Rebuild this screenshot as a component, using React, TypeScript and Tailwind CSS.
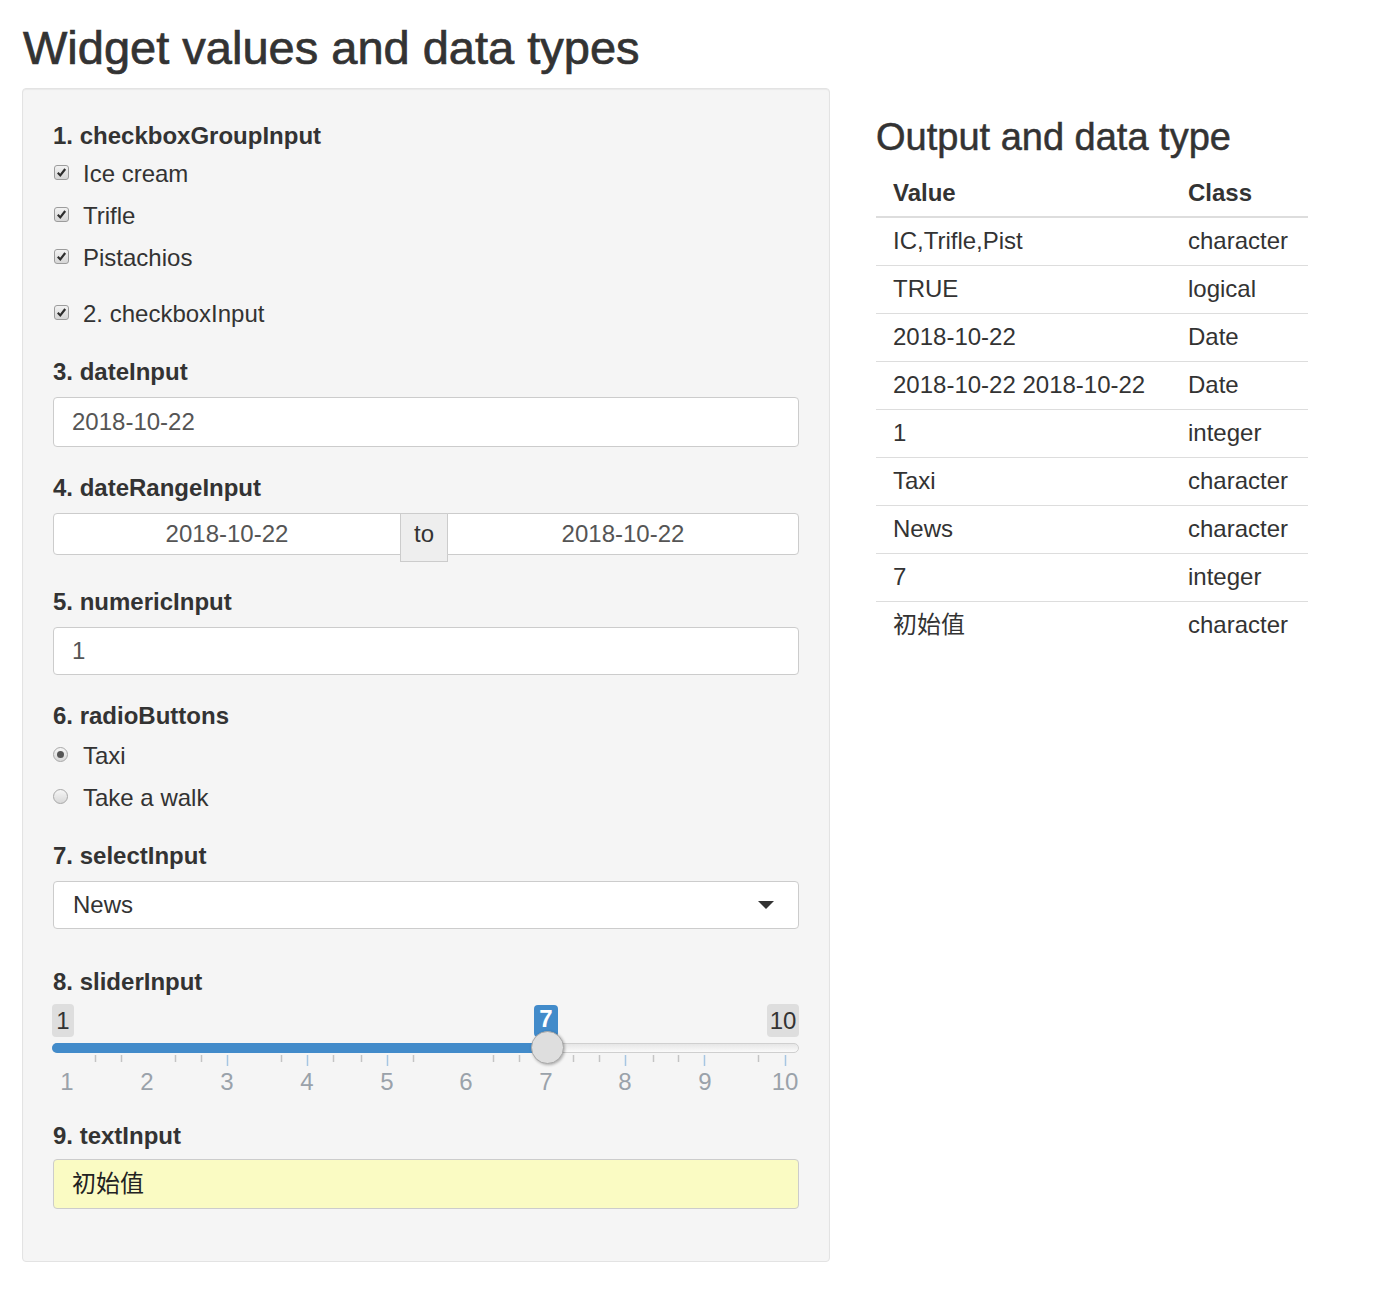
import React from "react";

const FONT = "font-['Liberation_Sans','Noto_Sans_CJK_SC',sans-serif]";

const rows: [string, string][] = [
	["IC,Trifle,Pist", "character"],
	["TRUE", "logical"],
	["2018-10-22", "Date"],
	["2018-10-22 2018-10-22", "Date"],
	["1", "integer"],
	["Taxi", "character"],
	["News", "character"],
	["7", "integer"],
	["初始值", "character"],
];

// slider tick positions, relative to the track's left edge
const minorTicks = [43, 69, 123, 149, 229, 281, 309, 361, 441, 467, 521, 547, 601, 626, 706];
const majorTicks = [175, 255, 335, 573, 652, 733];
const tickLabels = [15, 95, 175, 255, 335, 414, 494, 573, 653, 733];

function Label({ children, className = "" }: { children: React.ReactNode; className?: string }) {
	return <div className={`h-[34px] leading-[34px] font-bold ${className}`}>{children}</div>;
}

function CheckMark() {
	return (
		<span className="w-[15px] h-[15px] ml-px mt-[-3px] rounded-[3px] border border-[#9c9c9c] bg-gradient-to-b from-[#f2f2f2] to-[#d6d6d6] flex items-center justify-center">
			<svg width="11" height="11" viewBox="0 0 11 11">
				<path d="M1.8 5.8 L4.3 8.4 L9.2 2" fill="none" stroke="#2e2e2e" strokeWidth="2.2" />
			</svg>
		</span>
	);
}

function Checkbox({ label }: { label: string }) {
	return (
		<div className="h-[42px] flex items-center">
			<CheckMark />
			<span className="ml-[14px]">{label}</span>
		</div>
	);
}

function Radio({ label, checked }: { label: string; checked?: boolean }) {
	return (
		<div className="h-[42px] flex items-center">
			<span className="w-[15px] h-[15px] mt-[-3px] rounded-full border border-[#a8a8a8] bg-gradient-to-b from-[#f6f6f6] to-[#d8d8d8] flex items-center justify-center">
				{checked && <span className="w-[7px] h-[7px] rounded-full bg-[#555]" />}
			</span>
			<span className="ml-[15px]">{label}</span>
		</div>
	);
}

function Slider() {
	return (
		<div className="relative h-[120px] w-[748px] -ml-px">
			<div className="absolute left-0 top-[5px] w-[22px] h-[33px] rounded-[4px] bg-[#dedede] text-[#333] text-center leading-[33px]">1</div>
			<div className="absolute left-[715px] top-[5px] w-[32px] h-[33px] rounded-[4px] bg-[#dedede] text-[#333] text-center leading-[33px]">10</div>
			<div className="absolute left-[482px] top-[6px] w-[24px] h-[32px] rounded-[4px] bg-[#428bca] text-white font-bold text-center leading-[28px]">7</div>
			<div className="absolute left-0 top-[44px] w-[747px] h-[10px] rounded-full border border-[#cfcfcf] bg-gradient-to-b from-[#e6e6e6] to-[#fafafa]" />
			<div className="absolute left-0 top-[44px] w-[497px] h-[10px] rounded-l-full bg-[#428bca]" />
			<div className="absolute left-[479px] top-[32px] w-[33px] h-[33px] rounded-full border border-[#a9a9a9] bg-[#dedede] shadow-[1px_1px_3px_rgba(0,0,0,0.3)]" />
			<svg className="absolute left-0 top-[56px]" width="748" height="12">
				{minorTicks.map((x) => (
					<line key={x} x1={x + 0.5} x2={x + 0.5} y1="0" y2="7" stroke="#c4c4c4" strokeWidth="1.5" />
				))}
				{majorTicks.map((x) => (
					<line key={x} x1={x + 0.5} x2={x + 0.5} y1="0" y2="11" stroke="#a6c6e3" strokeWidth="1.5" />
				))}
			</svg>
			{tickLabels.map((x, i) => (
				<span
					key={x}
					className="absolute top-[70px] w-[40px] -ml-[20px] text-center leading-[26px] text-[#9aa2aa]"
					style={{ left: x }}
				>
					{i + 1}
				</span>
			))}
		</div>
	);
}

export default function App() {
	return (
		<div className={`${FONT} text-[24px] text-[#333] bg-white min-h-[1290px] pl-[22px]`}>
			<h1 className="pt-[22px] pl-px text-[47px] leading-[52px] text-[#333] [-webkit-text-stroke:0.7px_#333]">Widget values and data types</h1>

			<div className="flex gap-[46px] mt-[14px]">
				{/* 输入面板 */}
				<div className="w-[808px] h-[1174px] rounded-[4px] border border-[#e3e3e3] bg-[#f5f5f5] shadow-[inset_0_1px_1px_rgba(0,0,0,0.05)] pl-[30px] pr-[30px] pt-[30px]">
					<Label>1. checkboxGroupInput</Label>
					<Checkbox label="Ice cream" />
					<Checkbox label="Trifle" />
					<Checkbox label="Pistachios" />

					<div className="mt-[18px] h-[34px] flex items-center">
						<CheckMark />
						<span className="ml-[14px]">2. checkboxInput</span>
					</div>

					<Label className="mt-[24px]">3. dateInput</Label>
					<div className="mt-[8px] h-[50px] rounded-[4px] border border-[#ccc] bg-white pl-[18px] flex items-center text-[#555]">2018-10-22</div>

					<Label className="mt-[24px]">4. dateRangeInput</Label>
					<div className="mt-[8px] flex items-start text-[#555]">
						<div className="w-[348px] h-[42px] rounded-l-[4px] border border-[#ccc] bg-white flex items-center justify-center">2018-10-22</div>
						<div className="w-[48px] h-[49px] -ml-px border border-[#ccc] bg-[#eee] text-[#333] text-center pt-[3px] leading-[34px]">to</div>
						<div className="flex-1 h-[42px] -ml-px rounded-r-[4px] border border-[#ccc] bg-white flex items-center justify-center">2018-10-22</div>
					</div>

					<Label className="mt-[23px]">5. numericInput</Label>
					<div className="mt-[8px] h-[48px] rounded-[4px] border border-[#ccc] bg-white pl-[18px] flex items-center text-[#555]">1</div>

					<Label className="mt-[24px]">6. radioButtons</Label>
					<div className="mt-[2px]">
						<Radio label="Taxi" checked />
						<Radio label="Take a walk" />
					</div>

					<Label className="mt-[20px]">7. selectInput</Label>
					<div className="mt-[8px] h-[48px] rounded-[4px] border border-[#ccc] bg-white pl-[19px] pr-[24px] flex items-center justify-between text-[#333]">
						<span>News</span>
						<svg width="16" height="8" viewBox="0 0 16 8">
							<path d="M0 0 H16 L8 8 Z" fill="#333" />
						</svg>
					</div>

					<Label className="mt-[36px]">8. sliderInput</Label>
					<Slider />

					<Label>9. textInput</Label>
					<div className="mt-[6px] h-[50px] rounded-[4px] border border-[#ccc] bg-[#fafbc3] pl-[18px] flex items-center text-[#222]">初始值</div>
				</div>

				{/* 输出表格 */}
				<div className="w-[432px]">
					<h2 className="mt-[28px] text-[38px] leading-[42px] [-webkit-text-stroke:0.5px_#333]">Output and data type</h2>
					<table className="mt-[11px] w-[432px] border-collapse">
						<thead>
							<tr className="border-b-2 border-[#ddd]">
								<th className="w-[295px] h-[48px] pl-[17px] text-left font-bold">Value</th>
								<th className="pl-[17px] text-left font-bold">Class</th>
							</tr>
						</thead>
						<tbody>
							{rows.map(([value, cls], i) => (
								<tr key={i} className={i < rows.length - 1 ? "border-b border-[#ddd]" : ""}>
									<td className="h-[48px] pl-[17px]">{value}</td>
									<td className="pl-[17px]">{cls}</td>
								</tr>
							))}
						</tbody>
					</table>
				</div>
			</div>
		</div>
	);
}
